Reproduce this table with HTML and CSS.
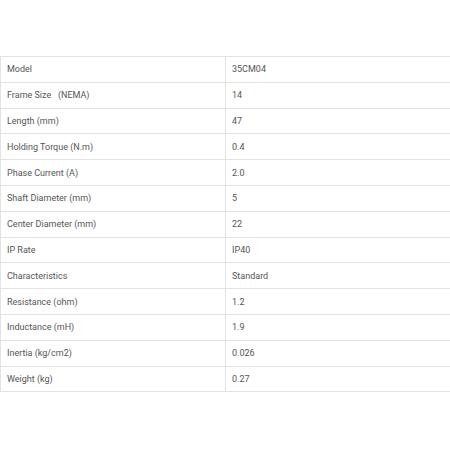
FILE: index.html
```html
<!DOCTYPE html>
<html>
<head>
<meta charset="utf-8">
<link rel="stylesheet" href="styles.css">
</head>
<body>
<div class="wrap">
<table class="specs">
<tbody>
<tr><td>Model</td><td>35CM04</td></tr>
<tr><td>Frame Size&nbsp;&nbsp;&nbsp;(NEMA)</td><td>14</td></tr>
<tr><td>Length (mm)</td><td>47</td></tr>
<tr><td>Holding Torque (N.m)</td><td>0.4</td></tr>
<tr><td>Phase Current (A)</td><td>2.0</td></tr>
<tr><td>Shaft Diameter (mm)</td><td>5</td></tr>
<tr><td>Center Diameter (mm)</td><td>22</td></tr>
<tr><td>IP Rate</td><td>IP40</td></tr>
<tr><td>Characteristics</td><td>Standard</td></tr>
<tr><td>Resistance (ohm)</td><td>1.2</td></tr>
<tr><td>Inductance (mH)</td><td>1.9</td></tr>
<tr><td>Inertia (kg/cm2)</td><td>0.026</td></tr>
<tr><td>Weight (kg)</td><td>0.27</td></tr>
</tbody>
</table>
</div>
</body>
</html>
```
FILE: styles.css
```css
html, body {
  margin: 0;
  padding: 0;
  background: #fff;
}
.wrap {
  padding-top: 56px;
  width: 452px;
  overflow: hidden;
}
.specs {
  border-collapse: collapse;
  width: 452px;
  table-layout: fixed;
  font-family: Roboto, "Liberation Sans", sans-serif;
  font-size: 9px;
  color: #555;
}
.specs td {
  border: 1px solid #e3e3e3;
  height: 24.8px;
  padding: 0 6px;
  vertical-align: middle;
  line-height: 12px;
}
.specs td:first-child {
  width: 212px;
}
```
